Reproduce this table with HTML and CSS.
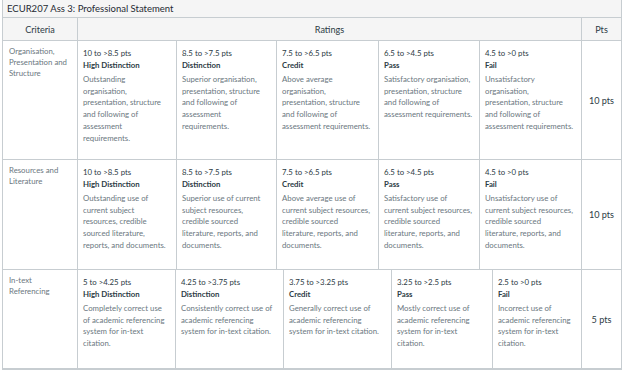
FILE: index.html
```html
<!DOCTYPE html>
<html>
<head>
<meta charset="utf-8">
<link rel="stylesheet" href="styles.css">
</head>
<body>
<div class="rubric">
  <div class="title">ECUR207 Ass 3: Professional Statement</div>
  <div class="row head">
    <div class="crit">Criteria</div>
    <div class="rats">Ratings</div>
    <div class="pts">Pts</div>
  </div>

  <div class="row r1">
    <div class="crit">Organisation, Presentation and Structure</div>
    <div class="rats grid g1">
      <div class="rating"><div class="range">10 to &gt;8.5 pts</div><div class="name">High Distinction</div><div class="desc">Outstanding organisation, presentation, structure and following of assessment requirements.</div></div>
      <div class="rating"><div class="range">8.5 to &gt;7.5 pts</div><div class="name">Distinction</div><div class="desc">Superior organisation, presentation, structure and following of assessment requirements.</div></div>
      <div class="rating"><div class="range">7.5 to &gt;6.5 pts</div><div class="name">Credit</div><div class="desc">Above average organisation, presentation, structure and following of assessment requirements.</div></div>
      <div class="rating"><div class="range">6.5 to &gt;4.5 pts</div><div class="name">Pass</div><div class="desc">Satisfactory organisation, presentation, structure and following of assessment requirements.</div></div>
      <div class="rating"><div class="range">4.5 to &gt;0 pts</div><div class="name">Fail</div><div class="desc">Unsatisfactory organisation, presentation, structure and following of assessment requirements.</div></div>
    </div>
    <div class="pts val">10 pts</div>
  </div>

  <div class="row r2">
    <div class="crit">Resources and Literature</div>
    <div class="rats grid g1">
      <div class="rating"><div class="range">10 to &gt;8.5 pts</div><div class="name">High Distinction</div><div class="desc">Outstanding use of current subject resources, credible sourced literature, reports, and documents.</div></div>
      <div class="rating"><div class="range">8.5 to &gt;7.5 pts</div><div class="name">Distinction</div><div class="desc">Superior use of current subject resources, credible sourced literature, reports, and documents.</div></div>
      <div class="rating"><div class="range">7.5 to &gt;6.5 pts</div><div class="name">Credit</div><div class="desc">Above average use of current subject resources, credible sourced literature, reports, and documents.</div></div>
      <div class="rating"><div class="range">6.5 to &gt;4.5 pts</div><div class="name">Pass</div><div class="desc">Satisfactory use of current subject resources, credible sourced literature, reports, and documents.</div></div>
      <div class="rating"><div class="range">4.5 to &gt;0 pts</div><div class="name">Fail</div><div class="desc">Unsatisfactory use of current subject resources, credible sourced literature, reports, and documents.</div></div>
    </div>
    <div class="pts val">10 pts</div>
  </div>

  <div class="row r3">
    <div class="crit">In-text Referencing</div>
    <div class="rats grid g3">
      <div class="rating"><div class="range">5 to &gt;4.25 pts</div><div class="name">High Distinction</div><div class="desc">Completely correct use of academic referencing system for in-text citation.</div></div>
      <div class="rating"><div class="range">4.25 to &gt;3.75 pts</div><div class="name">Distinction</div><div class="desc">Consistently correct use of academic referencing system for in-text citation.</div></div>
      <div class="rating"><div class="range">3.75 to &gt;3.25 pts</div><div class="name">Credit</div><div class="desc">Generally correct use of academic referencing system for in-text citation.</div></div>
      <div class="rating"><div class="range">3.25 to &gt;2.5 pts</div><div class="name">Pass</div><div class="desc">Mostly correct use of academic referencing system for in-text citation.</div></div>
      <div class="rating"><div class="range">2.5 to &gt;0 pts</div><div class="name">Fail</div><div class="desc">Incorrect use of academic referencing system for in-text citation.</div></div>
    </div>
    <div class="pts val">5 pts</div>
  </div>
</div>
</body>
</html>
```

FILE: styles.css
```css
* { box-sizing: border-box; }
html, body { margin: 0; padding: 0; background: #fff; }
body {
  font-family: Lato, "Noto Sans", sans-serif;
  color: #2d3b45;
}
.rubric {
  margin-left: 2px;
  width: 620px;
  border: 1px solid #c7cdd1;
  border-top: none;
}
.title {
  height: 18px;
  background: #f5f5f5;
  border-bottom: 1px solid #c7cdd1;
  font-size: 9.5px;
  line-height: 17px;
  padding-left: 4px;
  font-weight: 400;
  color: #1f2a33;
}
.row {
  display: flex;
  border-bottom: 1px solid #c7cdd1;
}
.crit {
  width: 75px;
  flex: none;
  border-right: 1px solid #c7cdd1;
  padding: 5px 6px;
  font-size: 7.8px;
  line-height: 11px;
  color: #6b7780;
}
.rats {
  width: 504px;
  flex: none;
  border-right: 1px solid #c7cdd1;
}
.pts {
  flex: 1;
  display: flex;
  align-items: center;
  justify-content: center;
}
.head {
  height: 23px;
  background: #f5f5f5;
  font-size: 9.1px;
  color: #2d3b45;
}
.head .crit, .head .rats {
  display: flex;
  align-items: center;
  justify-content: center;
  font-size: 9.1px;
  color: #2d3b45;
  padding: 0;
}
.val { font-size: 9.1px; color: #2d3b45; }
.grid { display: grid; }
.g1 { grid-template-columns: 99px 100px 102px 101px 1fr; }
.g3 { grid-template-columns: 98px 108px 108px 101px 1fr; }
.rating {
  border-right: 1px solid #c7cdd1;
  padding: 6px 6px 0 5px;
}
.rating:last-child { border-right: none; }
.range {
  font-size: 7.8px;
  line-height: 12px;
  color: #2d3b45;
}
.name {
  font-size: 7.8px;
  line-height: 12px;
  font-weight: 700;
  color: #2d3b45;
}
.desc {
  margin-top: 3px;
  font-size: 7.8px;
  line-height: 11.7px;
  color: #6b7780;
}
.r1 { height: 119px; }
.r2 { height: 110px; }
.r3 { height: 99px; }
```
